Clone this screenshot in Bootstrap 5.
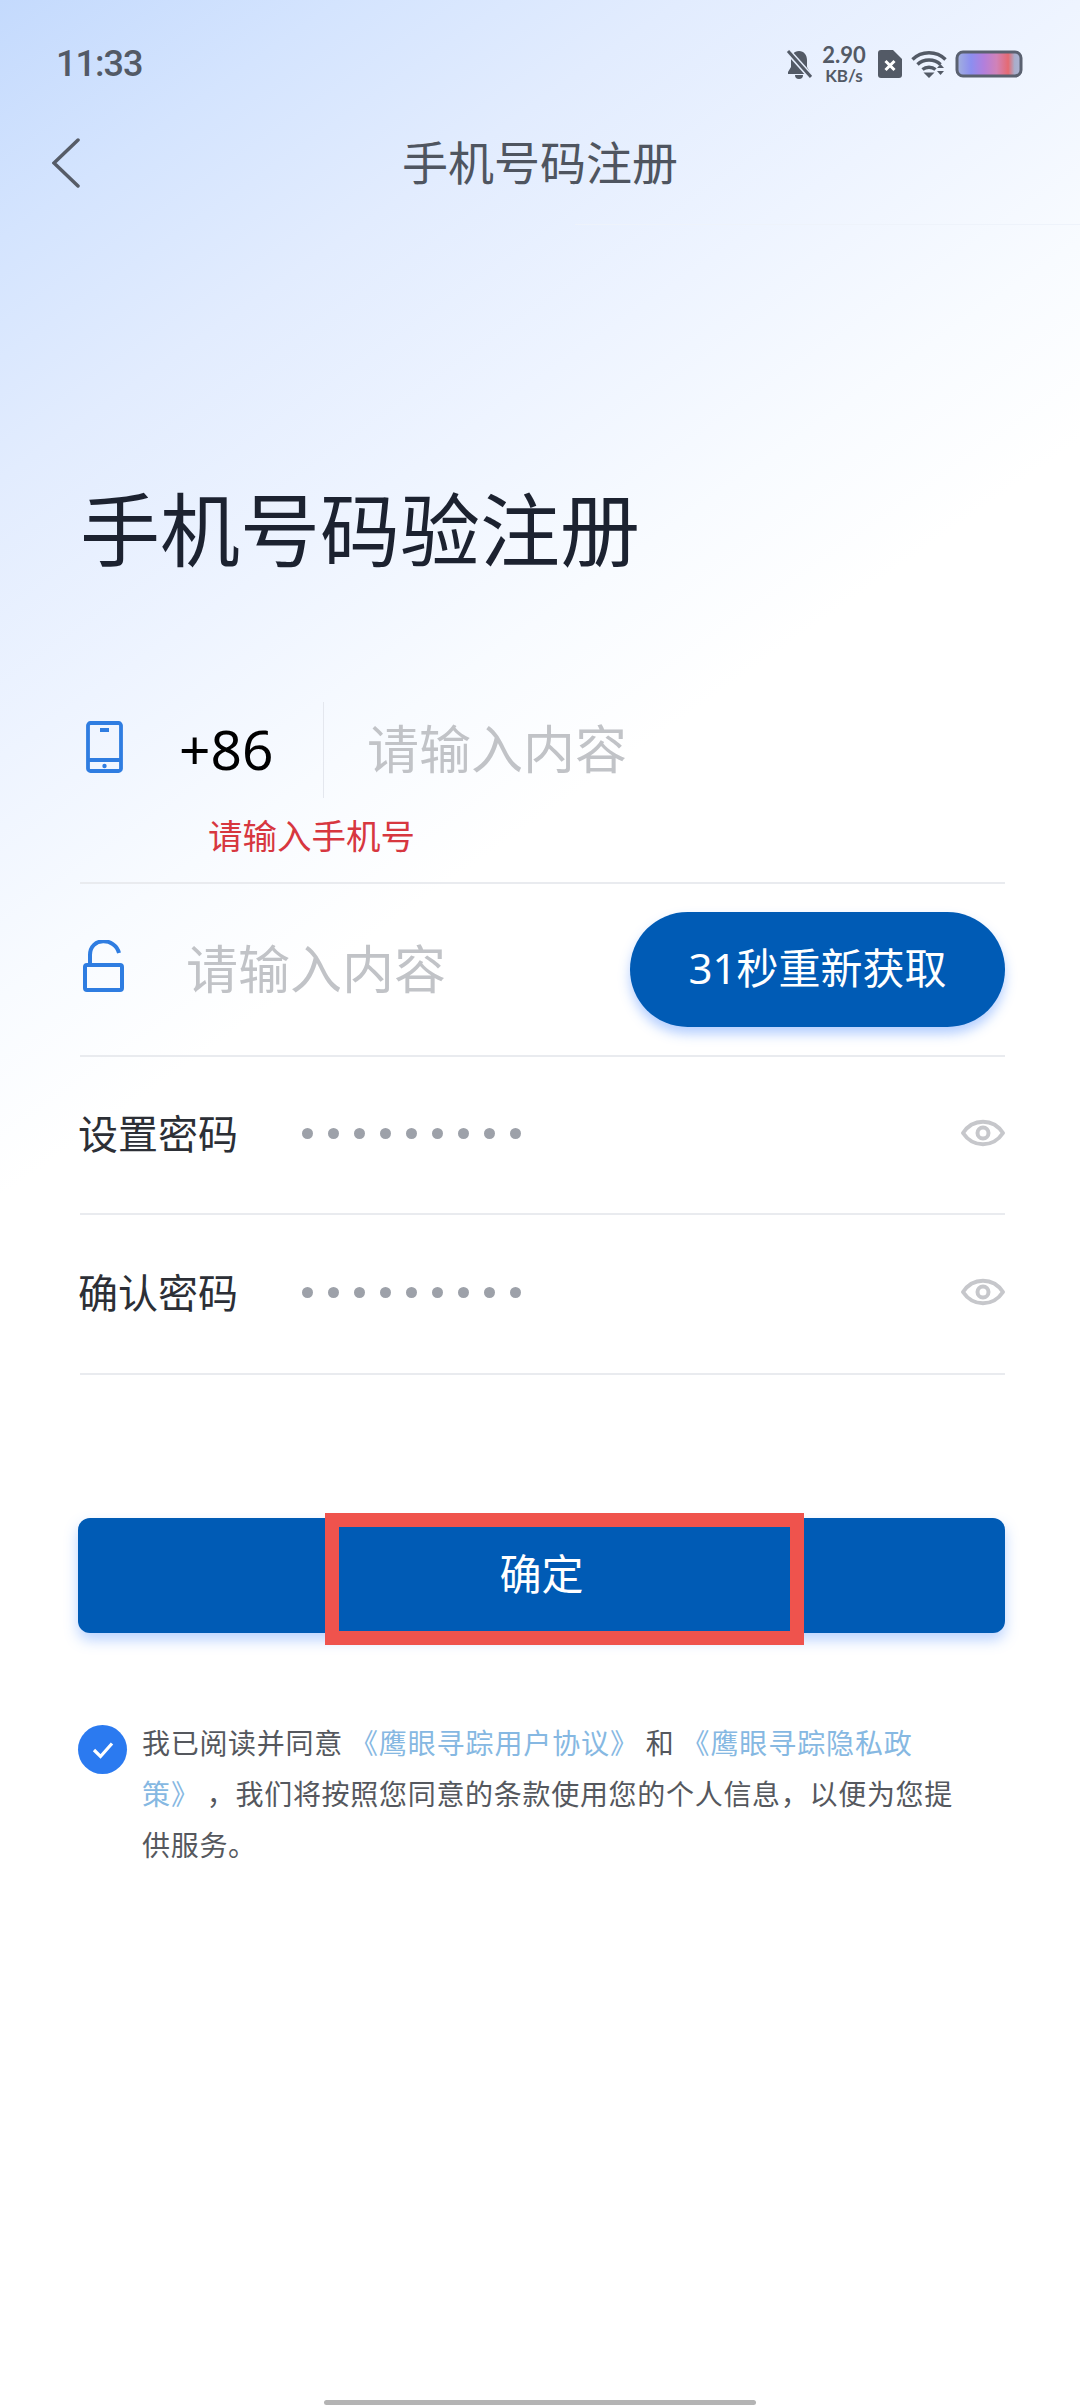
<!DOCTYPE html>
<html lang="zh-CN">
<head>
<meta charset="utf-8">
<title>手机号码注册</title>
<link href="https://cdn.jsdelivr.net/npm/bootstrap@5.3.0/dist/css/bootstrap.min.css" rel="stylesheet">
<style>
html,body{margin:0;background:#fff}
body{font-family:"Noto Sans","Noto Sans CJK SC",sans-serif}
.screen{width:1080px;height:2408px;overflow:hidden;background-color:#fff;background-image:linear-gradient(145deg,#c4dafd 0%,#d4e4fe 12%,#e2ecfe 24%,#eef4ff 38%,#f8fbff 50%,#fff 60%);background-size:1080px 1240px;background-repeat:no-repeat}
.statusbar{height:101px;padding:27px 57px 0 56px;color:#535a66}
.clock{font-family:Roboto,sans-serif;font-weight:500;font-size:36px;line-height:1;letter-spacing:-1px}
.speed{font-family:Lato,sans-serif;font-weight:700;line-height:1;text-align:center;width:44px;margin-left:10px}
.speed-a{font-size:22px}
.speed-b{font-size:17px;margin-top:1px}
.st-sim{margin-left:12px}
.st-wifi{margin-left:9px}
.st-batt{margin-left:8px}
.topnav{height:124px;padding-left:52px}
.topnav-title{font-family:"Noto Sans CJK SC",sans-serif;font-size:46px;color:#4f5560;left:0;right:0;top:0;bottom:0;line-height:118px}
.hairline{left:575px;right:0;bottom:0;height:1px;background:#eef3fb}
.page-title{font-family:"Noto Sans CJK SC",sans-serif;font-size:80px;line-height:100px;color:#1c2230;font-weight:400;margin:250px 0 0 80px}
.form-area{margin:125px 75px 0 80px}
.rule{border-bottom:2px solid #e9ebef}
.phone-line{height:100px}
.phone-icon{width:44px;margin-left:2px;margin-bottom:6px}
.dial{font-family:"Noto Sans",sans-serif;font-size:55px;line-height:1;color:#000;width:144px;margin-left:53px;padding-bottom:4px}
.vline{width:1px;height:96px;background:#e4e7ee}
.hint{font-family:"Noto Sans CJK SC",sans-serif;font-size:52px;line-height:1;color:#c1c3c7;padding-bottom:6px}
.hint-a{margin-left:43px}
.hint-b{margin-left:62px}
.err{font-family:"Noto Sans CJK SC",sans-serif;font-size:34.500px;line-height:50px;color:#d7373f;margin:9px 0 23px 128px}
.code-line{height:173px}
.lock-icon{margin-bottom:5px}
.code-btn{width:375px;height:115px;background:#005bb5;border:0;color:#fff;font-size:42px;line-height:1;padding:0 0 3px;font-family:"Noto Sans","Noto Sans CJK SC",sans-serif;box-shadow:0 7px 12px rgba(60,130,255,.38)}
.pass-line{height:158px}
.pass-line.extra{height:160px}
.pass-label{font-family:"Noto Sans CJK SC",sans-serif;font-size:40px;color:#2c2f36;width:224px;margin-left:-2px;line-height:1;padding-bottom:6px}
.pass-dots{gap:15px;padding-bottom:3px}
.pdot{width:11px;height:11px;border-radius:50%;background:#9da1a9}
.eye{margin-bottom:4px;margin-right:-1px}
.submit-wrap{margin:143px 75px 0 78px}
.submit-btn{height:115px;background:#005bb5;border:0;border-radius:12px;color:#fff;font-family:"Noto Sans CJK SC",sans-serif;font-size:42px;line-height:1;padding:0 0 8px;box-shadow:0 7px 14px rgba(60,130,255,.35)}
.mark-box{left:247px;right:201px;top:-5px;bottom:-12px;border:14px solid #ef534d}
.agree{margin:84px 0 0 78px;width:887px;gap:15px}
.tick{width:49px;height:49px;background:#2b7af0;margin-top:8px}
.agree-text{font-family:"Noto Sans CJK SC",sans-serif;font-size:28px;line-height:51px;letter-spacing:.7px;color:#55585e;margin:0}
.agree-text a{color:#86b8e2;text-decoration:none;letter-spacing:.9px}
.home-bar{width:432px;height:5px;background:#b4b4b4;margin:0 auto 3px}
</style>
</head>
<body>
<div class="screen d-flex flex-column">
  <div class="statusbar d-flex align-items-center justify-content-between">
    <div class="clock">11:33</div>
    <div class="d-flex align-items-center">
      <svg width="26" height="30" viewBox="0 0 26 30"><path fill="#535a66" d="M13 2c5 0 8 4 8 9v7l3 5v2H2v-2l3-5v-7c0-5 3-9 8-9z"/><path fill="#535a66" d="M9 26h8a4 4 0 0 1-8 0z"/><path d="M1 1l24 27" stroke="#e6eefd" stroke-width="6"/><path d="M2 2l23 26" stroke="#535a66" stroke-width="3"/></svg>
      <div class="speed"><div class="speed-a">2.90</div><div class="speed-b">KB/s</div></div>
      <svg class="st-sim" width="24" height="28" viewBox="0 0 24 28"><path fill="#535a66" d="M3 0h12l9 9v16a3 3 0 0 1-3 3H3a3 3 0 0 1-3-3V3a3 3 0 0 1 3-3z"/><path d="M7.500 11l9 9m0-9l-9 9" stroke="#fff" stroke-width="3"/></svg>
      <svg class="st-wifi" width="36" height="28" viewBox="0 0 36 28"><g fill="none" stroke="#535a66" stroke-width="3.400"><path d="M1.500 9.500c9-9 24-9 33 0"/><path d="M6.500 14.500c6-6 17-6 23 0"/><path d="M11.500 19.500c3.500-3 9.500-3 13 0"/></g><path fill="#535a66" d="M12.500 22.500h11l-5.500 5.500zM26 18l3.500-4 3.500 4zM26 21h7l-3.500 4z"/></svg>
      <svg class="st-batt" width="68" height="28" viewBox="0 0 68 28"><defs><linearGradient id="batt"><stop offset="0" stop-color="#a3b1dd"/><stop offset=".22" stop-color="#8c8ef0"/><stop offset=".42" stop-color="#b27fdc"/><stop offset=".62" stop-color="#d182b8"/><stop offset=".8" stop-color="#e56a72"/><stop offset=".9" stop-color="#a9aecb"/><stop offset="1" stop-color="#aab4d4"/></linearGradient></defs><rect x="2" y="2" width="64" height="24" rx="6" fill="url(#batt)" stroke="#5a6170" stroke-width="3"/></svg>
    </div>
  </div>

  <nav class="topnav position-relative d-flex align-items-center">
    <svg class="position-relative" width="28" height="50" viewBox="0 0 28 50"><path d="M26 2L2 25l24 23" fill="none" stroke="#565c67" stroke-width="3.500" stroke-linecap="round"/></svg>
    <div class="topnav-title position-absolute text-center">手机号码注册</div>
    <div class="hairline position-absolute"></div>
  </nav>

  <h1 class="page-title">手机号码验注册</h1>

  <div class="form-area">
    <div class="rule">
      <div class="phone-line d-flex align-items-center">
        <svg class="phone-icon" width="44" height="54" viewBox="0 0 44 54"><g fill="none" stroke="#2f7de1" stroke-width="3.800"><rect x="6" y="3" width="33" height="48" rx="2.500"/><path d="M6 40h33M18 10h9"/></g><circle cx="22.500" cy="46" r="2.200" fill="#2f7de1"/></svg>
        <div class="dial">+86</div>
        <div class="vline"></div>
        <div class="hint hint-a">请输入内容</div>
      </div>
      <div class="err">请输入手机号</div>
    </div>

    <div class="rule code-line d-flex align-items-center justify-content-between">
      <div class="d-flex align-items-center">
        <svg class="lock-icon" width="44" height="54" viewBox="0 0 44 54"><g fill="none" stroke="#2f7de1" stroke-width="4"><rect x="5" y="25" width="37" height="25" rx="2"/><path d="M10 25V15c0-18 25-18 29-2"/></g></svg>
        <div class="hint hint-b">请输入内容</div>
      </div>
      <button type="button" class="btn rounded-pill code-btn">31秒重新获取</button>
    </div>

    <div class="rule pass-line d-flex align-items-center">
      <div class="pass-label">设置密码</div>
      <div class="pass-dots d-flex"><span class="pdot"></span><span class="pdot"></span><span class="pdot"></span><span class="pdot"></span><span class="pdot"></span><span class="pdot"></span><span class="pdot"></span><span class="pdot"></span><span class="pdot"></span></div>
      <svg class="ms-auto eye" width="46" height="34" viewBox="0 0 46 34"><path d="M3 17C13 2 33 2 43 17 33 32 13 32 3 17z" fill="none" stroke="#c6c7cb" stroke-width="4" stroke-linejoin="round"/><circle cx="23" cy="17" r="5.500" fill="none" stroke="#c6c7cb" stroke-width="4"/></svg>
    </div>
    <div class="rule pass-line extra d-flex align-items-center">
      <div class="pass-label">确认密码</div>
      <div class="pass-dots d-flex"><span class="pdot"></span><span class="pdot"></span><span class="pdot"></span><span class="pdot"></span><span class="pdot"></span><span class="pdot"></span><span class="pdot"></span><span class="pdot"></span><span class="pdot"></span></div>
      <svg class="ms-auto eye" width="46" height="34" viewBox="0 0 46 34"><path d="M3 17C13 2 33 2 43 17 33 32 13 32 3 17z" fill="none" stroke="#c6c7cb" stroke-width="4" stroke-linejoin="round"/><circle cx="23" cy="17" r="5.500" fill="none" stroke="#c6c7cb" stroke-width="4"/></svg>
    </div>
  </div>

  <div class="submit-wrap">
    <button type="button" class="btn submit-btn w-100 position-relative">确定<span class="mark-box position-absolute"></span></button>
  </div>

  <div class="agree d-flex align-items-start">
    <div class="tick rounded-circle d-flex align-items-center justify-content-center flex-shrink-0">
      <svg width="24" height="20" viewBox="0 0 24 20"><path d="M3 10l6.500 6.500L21 3.500" fill="none" stroke="#fff" stroke-width="3.200"/></svg>
    </div>
    <p class="agree-text">我已阅读并同意 <a href="#">《鹰眼寻踪用户协议》</a> 和 <a href="#">《鹰眼寻踪隐私政策》</a> ，我们将按照您同意的条款使用您的个人信息，以便为您提供服务。</p>
  </div>

  <div class="home-bar rounded-pill mt-auto"></div>
</div>
<script src="https://cdn.jsdelivr.net/npm/bootstrap@5.3.0/dist/js/bootstrap.bundle.min.js"></script>
</body>
</html>
